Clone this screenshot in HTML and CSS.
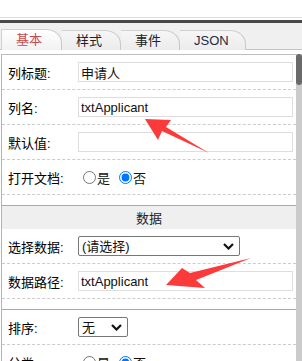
FILE: index.html
```html
<!DOCTYPE html>
<html lang="zh-CN">
<head>
  <meta charset="UTF-8">
  <title>属性</title>
  <link rel="stylesheet" href="styles.css">
</head>
<body>

  <div class="top-strip"></div>
  <div class="dark-bar"></div>

  <div class="tab-bar">
    <div class="tab active">基本</div>
    <div class="tab">样式</div>
    <div class="tab">事件</div>
    <div class="tab">JSON</div>
  </div>

  <div class="main">
    <div class="panel">
      <div class="section">
        <div class="row">
          <label class="label">列标题:</label>
          <input class="text-input" type="text" value="申请人">
        </div>
        <div class="row">
          <label class="label">列名:</label>
          <input class="text-input" type="text" value="txtApplicant">
        </div>
        <div class="row">
          <label class="label">默认值:</label>
          <input class="text-input" type="text" value="">
        </div>
        <div class="row">
          <label class="label">打开文档:</label>
          <span class="radios">
            <input type="radio" name="open" id="open-yes"><label for="open-yes">是</label>
            <input type="radio" name="open" id="open-no" checked><label for="open-no">否</label>
          </span>
        </div>
      </div>

      <div class="section">
        <div class="section-title">数据</div>
        <div class="row">
          <label class="label">选择数据:</label>
          <span class="select-wrap wide">
            <select class="select">
              <option>(请选择)</option>
            </select>
            <svg class="chevron" width="11" height="7" viewBox="0 0 11 7"><path d="M1 1 L5.5 5.5 L10 1" fill="none" stroke="#111" stroke-width="2.2"/></svg>
          </span>
        </div>
        <div class="row">
          <label class="label">数据路径:</label>
          <input class="text-input" type="text" value="txtApplicant">
        </div>
      </div>

      <div class="section last">
        <div class="row">
          <label class="label">排序:</label>
          <span class="select-wrap narrow">
            <select class="select">
              <option>无</option>
            </select>
            <svg class="chevron" width="11" height="7" viewBox="0 0 11 7"><path d="M1 1 L5.5 5.5 L10 1" fill="none" stroke="#111" stroke-width="2.2"/></svg>
          </span>
        </div>
        <div class="row">
          <label class="label">分类:</label>
          <span class="radios">
            <input type="radio" name="group" id="group-yes"><label for="group-yes">是</label>
            <input type="radio" name="group" id="group-no" checked><label for="group-no">否</label>
          </span>
        </div>
      </div>
    </div>

    <div class="scrollbar">
      <div class="thumb"></div>
    </div>
  </div>

  <!-- annotation arrows drawn on top of the screenshot -->
  <svg class="arrows" width="302" height="361" viewBox="0 0 302 361">
    <polygon points="145,119 171,120 166,127 209,153 162,131 158,140" fill="#fb3b3b"/>
    <polygon points="166,285 182,268 190,273 251,258 196,280 205,288" fill="#fb3b3b"/>
  </svg>

</body>
</html>
```

FILE: styles.css
```css
body {
  margin: 0;
  font-family: "Liberation Sans", "Noto Sans CJK SC", sans-serif;
  font-size: 13px;
  color: #111;
  background-color: #fff;
  height: 361px;
  overflow: hidden;
  position: relative;
}

.top-strip {
  height: 17px;
  border-bottom: 1px solid #dcdcdc;
}

.dark-bar {
  margin-top: 2px;
  height: 3px;
  background-color: #484848;
}

.tab-bar {
  display: flex;
  align-items: flex-end;
  height: 26px;
  padding-left: 1px;
  background-color: #f0f0f0;
  border-bottom: 1px solid #c6c6c6;
}

.tab {
  width: 59px;
  height: 20px;
  line-height: 20px;
  padding-left: 14px;
  box-sizing: border-box;
  margin-bottom: -1px;
  border: 1px solid #d0d0d0;
  border-bottom: none;
  border-right: 1px solid #c8c8c8;
  border-top-right-radius: 16px 14px;
  background: linear-gradient(#f6f6f6, #ececec);
  color: #222;
}

.tab + .tab {
  border-left: none;
}

.tab:nth-child(4) {
  width: 66px;
  color: #1e2a44;
}

.tab.active {
  width: 61px;
  color: #c64b4b;
  background: linear-gradient(#ffffff, #f2f2f2);
  height: 21px;
}

.main {
  display: flex;
  margin-top: 4px;
}

.panel {
  flex: 1;
  margin-left: 1px;
  border-left: 1px solid #b4b4b4;
  border-top: 1px solid #bdbdbd;
}

.section {
  padding-bottom: 10px;
  border-bottom: 1px solid #a8a8a8;
}

.section.last {
  border-bottom: none;
}

.section-title {
  height: 23px;
  line-height: 25px;
  text-align: center;
  background-color: #efefef;
  color: #222;
}

.row {
  display: flex;
  align-items: center;
  height: 35px;
  box-sizing: border-box;
  border-bottom: 1px dashed #cccccc;
}

.label {
  width: 70px;
  padding-left: 6px;
  color: #000;
}

.text-input {
  width: 215px;
  height: 20px;
  box-sizing: border-box;
  margin: 0;
  padding: 0 2px;
  border: 1px solid #dedede;
  font-family: inherit;
  font-size: 13px;
  color: #111;
  outline: none;
}

.radios {
  display: flex;
  align-items: center;
}

.radios input {
  margin: 0 1px 0 5px;
  width: 13px;
  height: 13px;
}

.radios label + input {
  margin-left: 9px;
}

.select-wrap {
  position: relative;
  display: inline-block;
}

.select {
  -webkit-appearance: none;
  appearance: none;
  height: 20px;
  box-sizing: border-box;
  margin: 0;
  padding: 0 0 0 3px;
  border: 1px solid #777;
  border-radius: 2px;
  background-color: #fff;
  font-family: inherit;
  font-size: 13px;
  color: #111;
}

.wide .select {
  width: 162px;
}

.narrow .select {
  width: 50px;
}

.chevron {
  position: absolute;
  right: 6px;
  top: 7px;
  pointer-events: none;
}

.scrollbar {
  width: 6px;
  background-color: #cbcbcb;
}

.thumb {
  height: 31px;
  margin-top: 0;
  border-radius: 3px;
  background-color: #6a6a6a;
}

.arrows {
  position: absolute;
  left: 0;
  top: 0;
  pointer-events: none;
}
```
